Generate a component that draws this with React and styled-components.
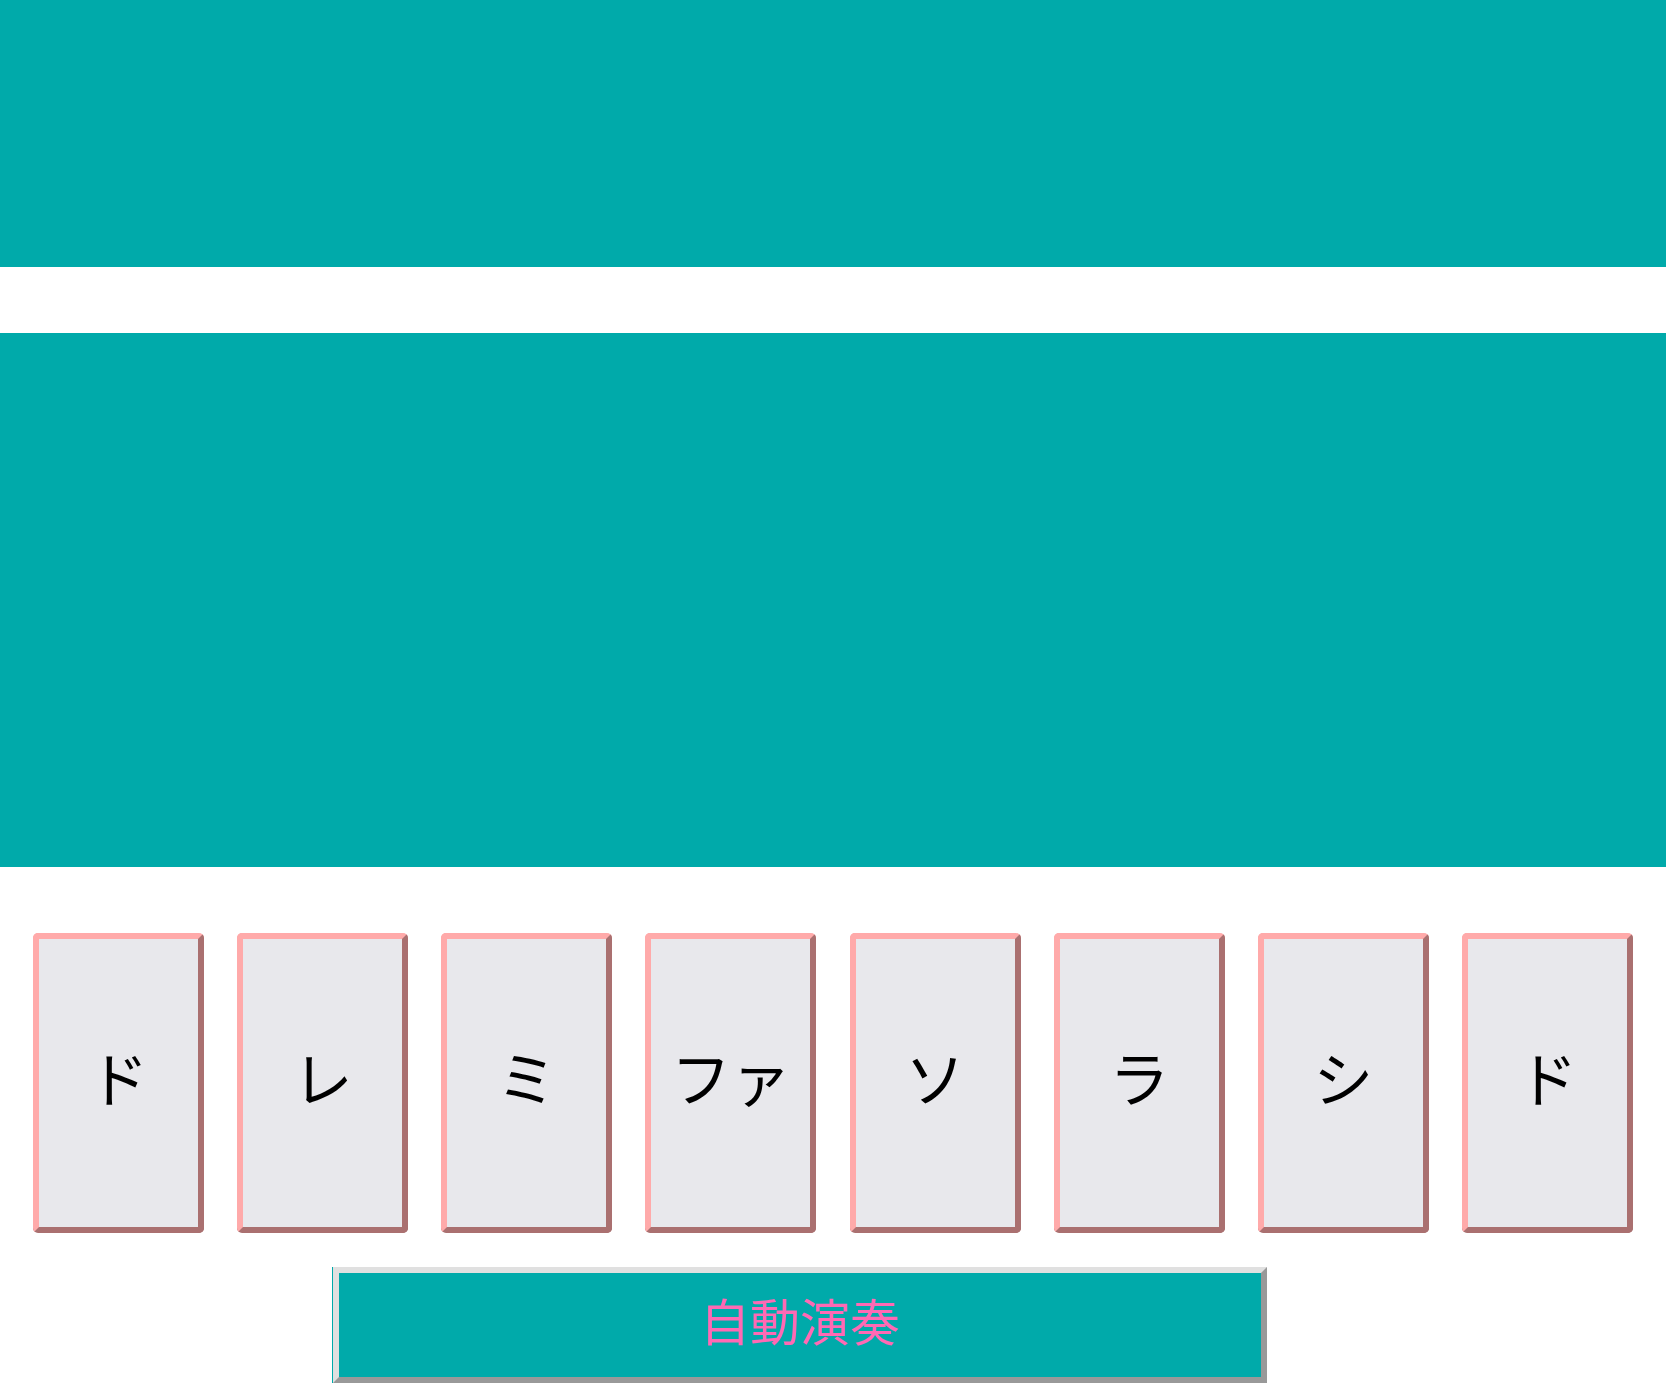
import styled, { createGlobalStyle } from "styled-components";

const GlobalStyle = createGlobalStyle`
  body {
    margin: 0;
    background: #ffffff;
    font-family: "Noto Sans CJK JP", "Noto Sans", sans-serif;
  }
`;

const Page = styled.div`
  display: flex;
  flex-direction: column;
`;

const Band = styled.div`
  background: #00aaaa;
  height: ${(props) => props.$height}px;
  margin-bottom: 66px;
`;

const Keyboard = styled.div`
  display: flex;
  justify-content: space-evenly;
`;

const Key = styled.button`
  box-sizing: border-box;
  width: 171px;
  height: 300px;
  padding: 0 0 14px;
  background: #e8e8ec;
  border: 6px solid;
  border-color: #ffaaaa #aa7070 #aa7070 #ffaaaa;
  border-radius: 5px;
  font-family: "Noto Sans CJK JP", sans-serif;
  font-size: 60px;
  line-height: 1;
  color: #000000;
  display: flex;
  align-items: center;
  justify-content: center;
  cursor: pointer;
`;

const AutoPlay = styled.button`
  box-sizing: border-box;
  margin: 34px 0 0 333px;
  width: 934px;
  height: 116px;
  padding: 0 0 12px;
  background: #00aaaa;
  border: 6px solid;
  border-color: #e0e0e0 #999999 #999999 #e0e0e0;
  outline: none;
  box-shadow: -1px 0 0 #00aaaa;
  font-family: "Noto Sans CJK JP", sans-serif;
  font-size: 50px;
  line-height: 1;
  color: #ff69b4;
  cursor: pointer;
`;

const notes = ["ド", "レ", "ミ", "ファ", "ソ", "ラ", "シ", "ド"];

const App = () => {
  return (
    <Page>
      <GlobalStyle />
      <Band $height={267} />
      <Band $height={534} />
      <Keyboard>
        {notes.map((note, i) => (
          <Key key={i}>{note}</Key>
        ))}
      </Keyboard>
      <div>
        <AutoPlay>自動演奏</AutoPlay>
      </div>
    </Page>
  );
};

export default App;
